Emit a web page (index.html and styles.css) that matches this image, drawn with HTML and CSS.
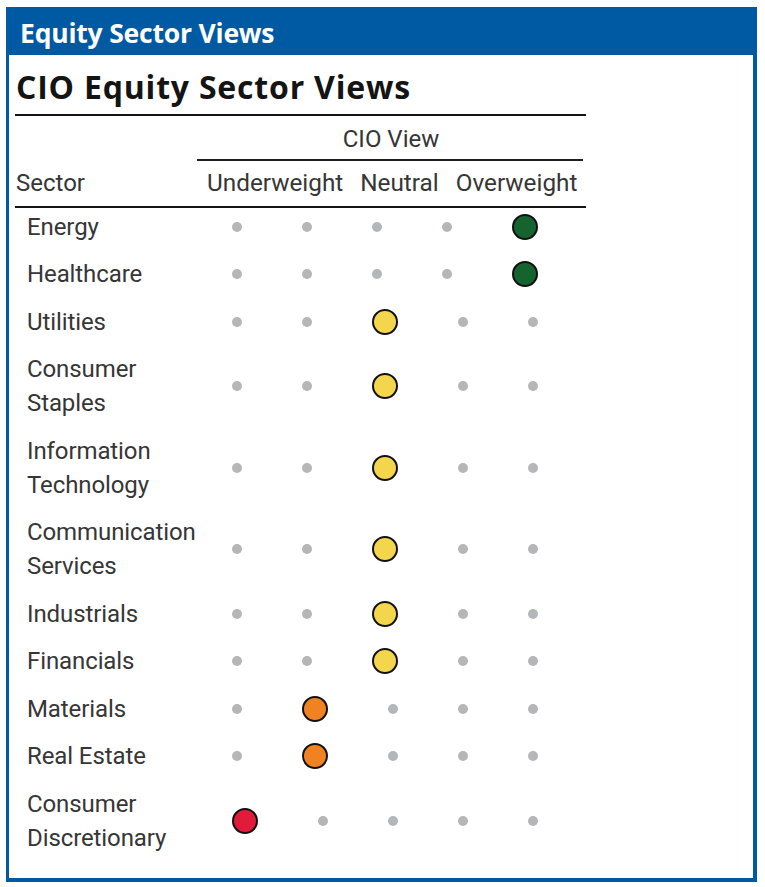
FILE: index.html
```html
<!DOCTYPE html>
<html lang="en">
<head>
<meta charset="utf-8">
<title>Equity Sector Views</title>
<link rel="stylesheet" href="styles.css">
</head>
<body>
<div class="frame">
  <div class="banner">Equity Sector Views</div>
  <div class="content">
    <div class="title">CIO Equity Sector Views</div>
    <div class="cio-view">CIO View</div>
    <div class="head-row">
      <div class="sector-h">Sector</div>
      <div class="views">
        <span>Underweight</span>
        <span>Neutral</span>
        <span>Overweight</span>
      </div>
    </div>
    <div class="rows">
      <div class="row">
        <div class="label">Energy</div>
        <div class="dots"><span class="dot"></span><span class="dot"></span><span class="dot"></span><span class="dot"></span><span class="dot big green"></span></div>
      </div>
      <div class="row">
        <div class="label">Healthcare</div>
        <div class="dots"><span class="dot"></span><span class="dot"></span><span class="dot"></span><span class="dot"></span><span class="dot big green"></span></div>
      </div>
      <div class="row">
        <div class="label">Utilities</div>
        <div class="dots"><span class="dot"></span><span class="dot"></span><span class="dot big yellow"></span><span class="dot"></span><span class="dot"></span></div>
      </div>
      <div class="row two">
        <div class="label">Consumer<br>Staples</div>
        <div class="dots"><span class="dot"></span><span class="dot"></span><span class="dot big yellow"></span><span class="dot"></span><span class="dot"></span></div>
      </div>
      <div class="row two">
        <div class="label">Information<br>Technology</div>
        <div class="dots"><span class="dot"></span><span class="dot"></span><span class="dot big yellow"></span><span class="dot"></span><span class="dot"></span></div>
      </div>
      <div class="row two">
        <div class="label">Communication<br>Services</div>
        <div class="dots"><span class="dot"></span><span class="dot"></span><span class="dot big yellow"></span><span class="dot"></span><span class="dot"></span></div>
      </div>
      <div class="row">
        <div class="label">Industrials</div>
        <div class="dots"><span class="dot"></span><span class="dot"></span><span class="dot big yellow"></span><span class="dot"></span><span class="dot"></span></div>
      </div>
      <div class="row">
        <div class="label">Financials</div>
        <div class="dots"><span class="dot"></span><span class="dot"></span><span class="dot big yellow"></span><span class="dot"></span><span class="dot"></span></div>
      </div>
      <div class="row">
        <div class="label">Materials</div>
        <div class="dots"><span class="dot"></span><span class="dot big orange"></span><span class="dot"></span><span class="dot"></span><span class="dot"></span></div>
      </div>
      <div class="row">
        <div class="label">Real Estate</div>
        <div class="dots"><span class="dot"></span><span class="dot big orange"></span><span class="dot"></span><span class="dot"></span><span class="dot"></span></div>
      </div>
      <div class="row two">
        <div class="label">Consumer<br>Discretionary</div>
        <div class="dots"><span class="dot big red"></span><span class="dot"></span><span class="dot"></span><span class="dot"></span><span class="dot"></span></div>
      </div>
    </div>
  </div>
</div>
</body>
</html>
```

FILE: styles.css
```css
* { box-sizing: border-box; }

html, body {
  margin: 0;
  padding: 0;
  background: #ffffff;
}

body {
  font-family: Roboto, "Liberation Sans", sans-serif;
  color: #363636;
}

.frame {
  margin: 7px 0 0 6px;
  width: 751px;
  border-left: 3px solid #005aa3;
  border-right: 4px solid #005aa3;
  border-bottom: 4px solid #005aa3;
  background: #ffffff;
}

.banner {
  height: 48px;
  padding: 4px 0 0 11px;
  line-height: 44px;
  background: #005aa3;
  color: #ffffff;
  font-family: "Open Sans", "Liberation Sans", sans-serif;
  font-weight: 700;
  font-size: 26.5px;
  letter-spacing: -0.2px;
  white-space: nowrap;
}

.content {
  padding: 0 0 16px 6px;
  width: 577px;
}

.title {
  margin-top: 12px;
  padding: 0 0 7px 1px;
  line-height: 40px;
  font-family: "Open Sans", "Liberation Sans", sans-serif;
  font-weight: 700;
  font-size: 32px;
  letter-spacing: 0.8px;
  color: #141414;
  border-bottom: 2px solid #141414;
  white-space: nowrap;
}

.cio-view {
  margin: 0 3px 0 182px;
  padding: 5.5px 0 3.5px 2px;
  line-height: 34px;
  font-size: 24px;
  text-align: center;
  border-bottom: 2px solid #1e1e1e;
}

.head-row {
  display: flex;
  padding: 5px 0 6px;
  line-height: 34px;
  font-size: 24px;
  border-bottom: 2px solid #141414;
}

.sector-h {
  width: 182px;
  padding-left: 1px;
}

.views {
  display: flex;
  gap: 17px;
  padding-left: 10px;
  font-size: 24.3px;
  white-space: nowrap;
}

.row {
  display: flex;
  align-items: center;
  height: 47.5px;
}

.row:first-child {
  height: 42.5px;
  padding-bottom: 4.5px;
}

.row.two {
  height: 81.5px;
}

.label {
  width: 217px;
  padding-left: 12px;
  font-size: 24px;
  line-height: 34px;
  letter-spacing: -0.1px;
}

.dots {
  display: flex;
  align-items: center;
  gap: 60px;
}

.dot {
  display: block;
  width: 10px;
  height: 10px;
  border-radius: 50%;
  background: #b5b6ba;
}

.dot.big {
  width: 26px;
  height: 26px;
  border: 2px solid #111111;
}

.green { background: #15632f; }
.yellow { background: #f3d64c; }
.orange { background: #f08321; }
.red { background: #e11b3b; }
```
